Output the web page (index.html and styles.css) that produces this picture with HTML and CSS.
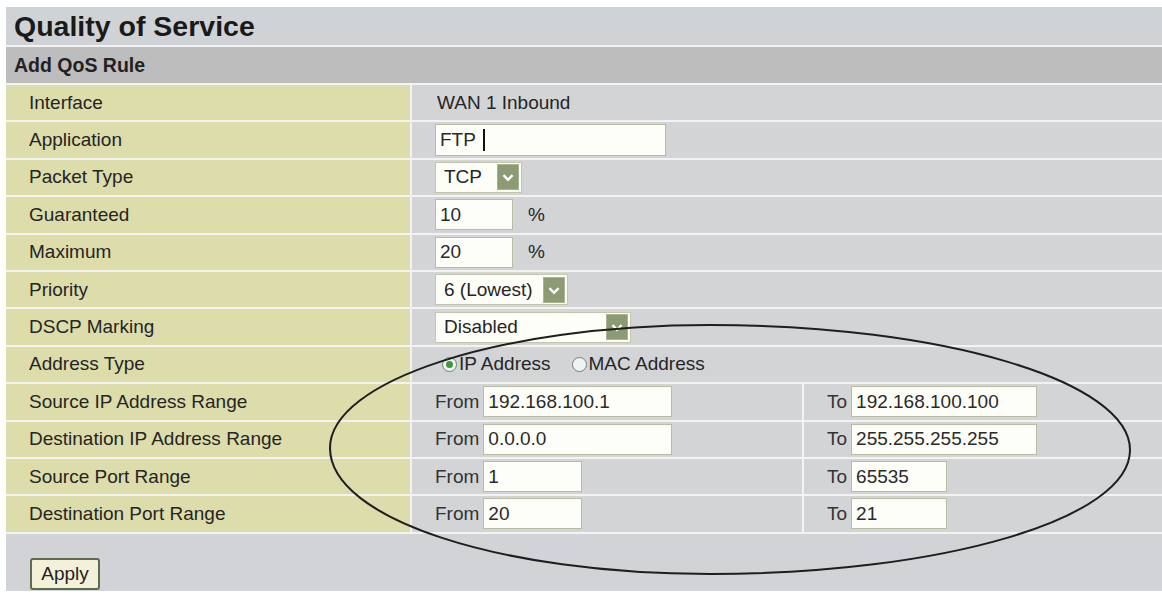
FILE: index.html
```html
<!DOCTYPE html>
<html>
<head>
<meta charset="utf-8">
<title>Quality of Service</title>
<link rel="stylesheet" href="styles.css">
</head>
<body>
<div class="panel">
  <div class="title">Quality of Service</div>
  <div class="section-head">Add QoS Rule</div>
  <div class="form">
    <div class="label">Interface</div>
    <div class="value wide">WAN 1 Inbound</div>

    <div class="label">Application</div>
    <div class="value wide"><div class="field w-app">FTP<span class="caret"></span></div></div>

    <div class="label">Packet Type</div>
    <div class="value wide"><div class="select w-tcp"><span class="sel-text">TCP</span><span class="arrow"><svg width="22" height="26" viewBox="0 0 22 26"><path d="M6 11 L11 16 L16 11" fill="none" stroke="#fff" stroke-width="2.6"/></svg></span></div></div>

    <div class="label">Guaranteed</div>
    <div class="value wide"><input class="field w-pct" type="text" value="10"><span class="pct">%</span></div>

    <div class="label">Maximum</div>
    <div class="value wide"><input class="field w-pct" type="text" value="20"><span class="pct">%</span></div>

    <div class="label">Priority</div>
    <div class="value wide"><div class="select w-prio"><span class="sel-text">6 (Lowest)</span><span class="arrow"><svg width="22" height="26" viewBox="0 0 22 26"><path d="M6 11 L11 16 L16 11" fill="none" stroke="#fff" stroke-width="2.6"/></svg></span></div></div>

    <div class="label">DSCP Marking</div>
    <div class="value wide"><div class="select w-dscp"><span class="sel-text">Disabled</span><span class="arrow"><svg width="22" height="26" viewBox="0 0 22 26"><path d="M6 11 L11 16 L16 11" fill="none" stroke="#fff" stroke-width="2.6"/></svg></span></div></div>

    <div class="label">Address Type</div>
    <div class="value wide radios">
      <span class="radio checked"></span><span class="radio-label">IP Address</span>
      <span class="radio"></span><span class="radio-label">MAC Address</span>
    </div>

    <div class="label">Source IP Address Range</div>
    <div class="value"><span class="pre">From</span><input class="field w-ip" type="text" value="192.168.100.1"></div>
    <div class="value"><span class="pre">To</span><input class="field w-ip2" type="text" value="192.168.100.100"></div>

    <div class="label">Destination IP Address Range</div>
    <div class="value"><span class="pre">From</span><input class="field w-ip" type="text" value="0.0.0.0"></div>
    <div class="value"><span class="pre">To</span><input class="field w-ip2" type="text" value="255.255.255.255"></div>

    <div class="label">Source Port Range</div>
    <div class="value"><span class="pre">From</span><input class="field w-port" type="text" value="1"></div>
    <div class="value"><span class="pre">To</span><input class="field w-port2" type="text" value="65535"></div>

    <div class="label">Destination Port Range</div>
    <div class="value"><span class="pre">From</span><input class="field w-port" type="text" value="20"></div>
    <div class="value"><span class="pre">To</span><input class="field w-port2" type="text" value="21"></div>
  </div>
  <div class="footer"><button class="btn" type="button">Apply</button></div>
</div>
<svg class="annotation" width="1162" height="600" viewBox="0 0 1162 600">
  <path d="M710 325 C942 325 1130 381 1130 450 C1130 519 942 574 710 574 C500 574 330 519 330 448 C330 381 500 325 710 325 Z" fill="none" stroke="#1e1e1e" stroke-width="2"/>
</svg>
</body>
</html>
```
FILE: styles.css
```css
html, body {
  margin: 0;
  padding: 0;
  background: #ffffff;
}
body {
  position: relative;
  width: 1162px;
  height: 600px;
  overflow: hidden;
  font-family: "Liberation Sans", Arial, sans-serif;
  color: #1f1f1f;
}
.panel {
  margin: 7px 0 0 6px;
  width: 1156px;
  display: flex;
  flex-direction: column;
  gap: 2px;
  background: #f3f3f3;
}
.title {
  height: 38px;
  background: #d0d3d6;
  font-size: 28.5px;
  font-weight: bold;
  padding-left: 8px;
  display: flex;
  align-items: center;
  color: #1a1a1a;
}
.section-head {
  height: 36px;
  background: #bdbdbd;
  font-size: 19.5px;
  font-weight: bold;
  padding-left: 8px;
  display: flex;
  align-items: center;
  color: #222;
}
.form {
  display: grid;
  grid-template-columns: 404px 390px 1fr;
  grid-auto-rows: 35.4px;
  gap: 2px;
}
.label {
  background: #dddcab;
  padding-left: 23px;
  display: flex;
  align-items: center;
  font-size: 19px;
  color: #252525;
}
.value {
  background: #d2d4d6;
  padding-left: 23px;
  display: flex;
  align-items: center;
  font-size: 19px;
  color: #252525;
}
.value.wide {
  grid-column: 2 / 4;
  padding-left: 25px;
}
.field {
  box-sizing: border-box;
  height: 31px;
  border: 1px solid #b9bc9e;
  background: #fefef9;
  font-family: "Liberation Sans", Arial, sans-serif;
  font-size: 19px;
  color: #2a2a2a;
  padding: 0 4px;
  margin: 0;
  display: flex;
  align-items: center;
  outline: none;
}
.value.wide .field,
.value.wide .select {
  margin-left: -2px;
}
.caret {
  display: inline-block;
  width: 2px;
  height: 22px;
  background: #111;
  margin-left: 7px;
}
.w-app { width: 231px; height: 32px; }
.w-pct { width: 78px; }
.w-ip { width: 189px; }
.w-ip2 { width: 186px; }
.w-port { width: 99px; }
.w-port2 { width: 96px; }
.pre {
  margin-right: 4px;
  color: #333;
}
.pct {
  margin-left: 15px;
}
.select {
  box-sizing: border-box;
  height: 31px;
  border: 1px solid #c3c6a8;
  background: #fefef9;
  display: flex;
  align-items: center;
  justify-content: space-between;
  padding: 0 2px 0 8px;
}
.w-tcp { width: 87px; }
.w-prio { width: 133px; }
.w-dscp { width: 196px; }
.arrow {
  width: 22px;
  height: 26px;
  box-sizing: border-box;
  background: #8c9b73;
  border: 1px solid #a9b590;
  display: flex;
  align-items: center;
  justify-content: center;
}
.arrow svg {
  display: block;
}
.radios {
  gap: 0;
}
.radio {
  box-sizing: border-box;
  width: 15px;
  height: 15px;
  border-radius: 50%;
  border: 1px solid #6e7f84;
  background: #eef3f3;
  margin-left: 5px;
  position: relative;
}
.radio + .radio-label {
  margin-left: 2px;
}
.radio-label + .radio {
  margin-left: 21px;
}
.radio.checked::after {
  content: "";
  position: absolute;
  left: 3px;
  top: 3px;
  width: 7px;
  height: 7px;
  border-radius: 50%;
  background: #3f9a3a;
}
.footer {
  height: 57px;
  background: #d1d3d6;
  padding: 24px 0 0 24px;
  box-sizing: border-box;
}
.btn {
  box-sizing: border-box;
  width: 70px;
  height: 32px;
  background: #f4f1d9;
  border: 2px solid #5d6b4e;
  border-radius: 3px;
  font-family: "Liberation Sans", Arial, sans-serif;
  font-size: 19px;
  color: #222;
  padding: 0;
}
.annotation {
  position: absolute;
  left: 0;
  top: 0;
  pointer-events: none;
}
```
